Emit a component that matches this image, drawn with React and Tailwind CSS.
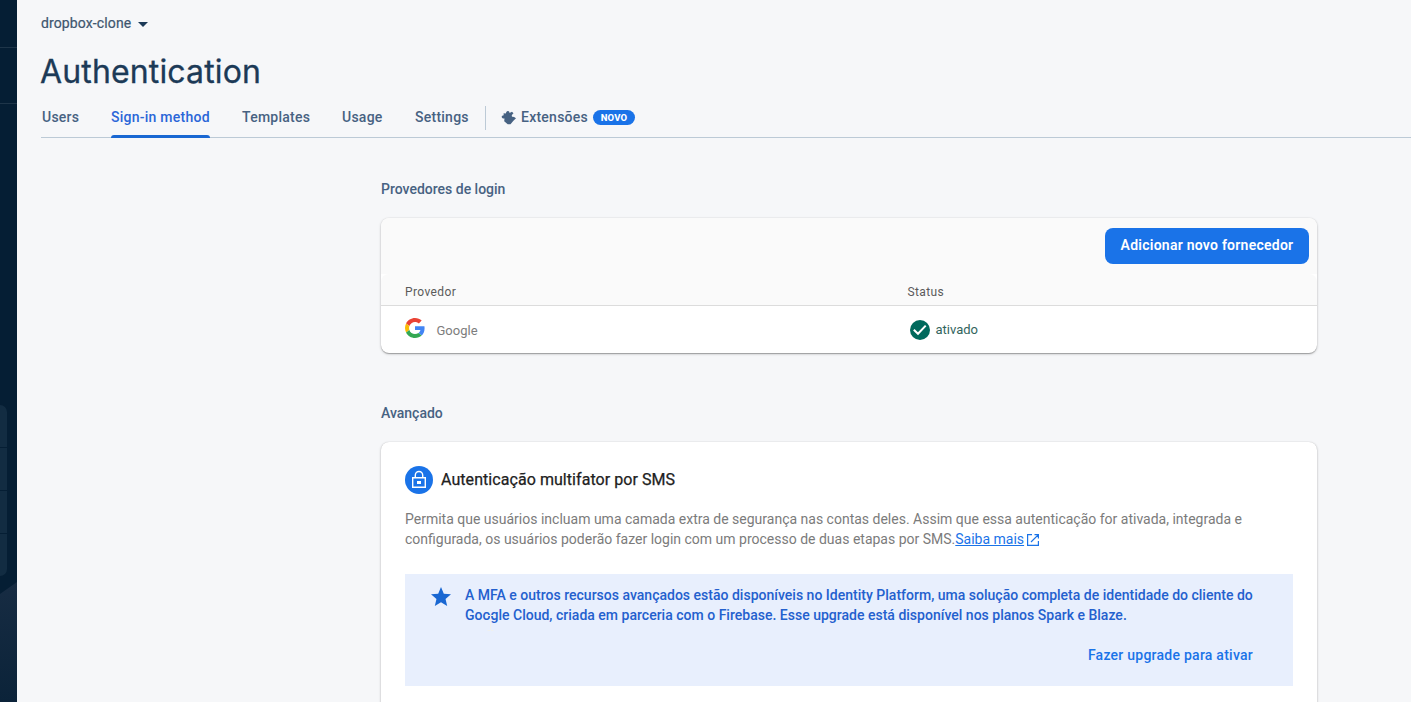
const TABS = [
  { label: "Users", cls: "w-[38px] pl-px" },
  { label: "Sign-in method", cls: "w-[99px]", active: true },
  { label: "Templates", cls: "w-[68px]" },
  { label: "Usage", cls: "w-[41px]" },
  { label: "Settings", cls: "w-[54px]" },
];

function GoogleLogo() {
  return (
    <svg viewBox="0 0 48 48" className="block size-5">
      <path fill="#EA4335" d="M24 9.5c3.54 0 6.71 1.22 9.21 3.6l6.85-6.85C35.9 2.38 30.47 0 24 0 14.62 0 6.51 5.38 2.56 13.22l7.98 6.19C12.43 13.72 17.74 9.5 24 9.5z" />
      <path fill="#4285F4" d="M46.98 24.55c0-1.57-.15-3.09-.38-4.55H24v9.02h12.94c-.58 2.96-2.26 5.48-4.78 7.18l7.73 6c4.51-4.18 7.09-10.36 7.09-17.65z" />
      <path fill="#FBBC05" d="M10.53 28.59c-.48-1.45-.76-2.99-.76-4.59s.27-3.14.76-4.59l-7.98-6.19C.92 16.46 0 20.12 0 24c0 3.88.92 7.54 2.56 10.78l7.97-6.19z" />
      <path fill="#34A853" d="M24 48c6.48 0 11.93-2.13 15.89-5.81l-7.73-6c-2.15 1.45-4.92 2.3-8.16 2.3-6.26 0-11.57-4.22-13.47-9.91l-7.98 6.19C6.51 42.62 14.62 48 24 48z" />
    </svg>
  );
}

function Sidebar() {
  return (
    <aside className="flex w-[17px] shrink-0 flex-col bg-[#051e34]">
      <div className="h-12 border-b border-[#1e3549]" />
      <div className="h-14 border-b border-[#1e3549]" />
      <div className="mt-[301px] flex h-[171px] w-[7px] flex-col overflow-hidden rounded-r-lg bg-[#122c42]">
        <div className="h-[43px] border-b border-[#051e34]" />
        <div className="h-[43px] border-b border-[#051e34]" />
        <div className="h-[43px] border-b border-[#051e34]" />
      </div>
      <svg viewBox="0 0 17 126" className="block h-[126px] w-[17px]">
        <defs>
          <linearGradient id="slope" x1="0" y1="0" x2="0" y2="1">
            <stop offset="0" stopColor="#172c43" />
            <stop offset="1" stopColor="#0b2339" />
          </linearGradient>
        </defs>
        <path d="M0 18L17 6V126H0z" fill="url(#slope)" />
      </svg>
    </aside>
  );
}

function Header() {
  return (
    <header className="ml-6">
      <div className="flex h-[46px] items-center text-sm font-medium text-[#3f566f]">
        <span className="w-[90px] whitespace-nowrap font-normal tracking-[0.12px] [-webkit-text-stroke:0.2px]">dropbox-clone</span>
        <svg viewBox="0 0 10 5" className="mt-0.5 ml-[7px] h-[5px] w-[10px]">
          <path d="M0 0h10L5 5z" fill="#1c3a57" />
        </svg>
      </div>
      <h1 className="-ml-px h-[52px] font-[Inter,sans-serif] text-[32px] leading-[52px] tracking-[0.15px] whitespace-nowrap text-[#1c3a57] [-webkit-text-stroke:0.3px]">
        Authentication
      </h1>
      <nav className="flex h-10 border-b border-[#bccad6] text-sm leading-[38px] font-medium tracking-[0.25px] text-[#476282]">
        <div className="flex gap-8">
          {TABS.map((t) => (
            <div key={t.label} className={t.cls + " flex h-10 flex-col justify-between whitespace-nowrap"}>
              <span className={t.active ? "text-[#2a66d8]" : ""}>{t.label}</span>
              {t.active && <span className="h-[3px] shrink-0 -translate-y-px rounded-t-[3px] bg-[#1967d2]" />}
            </div>
          ))}
        </div>
        <div className="mt-2 ml-4 h-6 w-px bg-[#bccad6]" />
        <div className="ml-[15px] flex h-[39px] items-start">
          <svg viewBox="0 0 15 15" className="mt-3 size-[15px]">
            <path
              d="M2.600 3.200L4.700 3.600C5.200 3.300 5 1.300 6.700 1.100 8.200 1 8.500 2 8.500 3.100L11 1.700 12.500 3.200 11.300 4.600C10 6 11.200 7.500 12.700 6.800L15 8.300 12.200 11 9.500 14.200H6.700L3.200 11.300 3.500 8.500C2.200 8.600 1 8.200.7 7 .5 6 1.500 5.500 2.700 5.200z"
              fill="#476282"
            />
          </svg>
          <span className="ml-[5px] w-[67px] whitespace-nowrap">Extensões</span>
          <span className="mt-3 ml-[5px] flex h-[15px] w-[42px] items-center justify-center rounded-full bg-[#1a73e8] text-[9.5px] leading-none font-extrabold tracking-[0.2px] text-white">
            NOVO
          </span>
        </div>
      </nav>
    </header>
  );
}

function Providers() {
  return (
    <section>
      <h2 className="h-[29px] text-sm leading-5 font-medium text-[#476282]">Provedores de login</h2>
      <div className="mt-[10px] h-[135px] overflow-hidden rounded-lg bg-white shadow-[0_2px_1px_-1px_rgba(0,0,0,.15),0_1px_1px_0_rgba(0,0,0,.1),0_1px_3px_0_rgba(0,0,0,.2),0_0_1px_0_rgba(0,0,0,.2)]">
        <div className="flex h-14 justify-end bg-[#fafafa] pt-[10px] pr-2">
          <button className="h-9 w-[204px] rounded-lg bg-[#1a73e8] pb-0.5 text-sm font-semibold tracking-[0.25px] whitespace-nowrap text-white">
            Adicionar novo fornecedor
          </button>
        </div>
        <div className="bg-white">
          <div className="flex h-8 rounded-t-lg border-b border-[#dcdcdc] bg-[#fafafa] pt-2 pl-6 text-xs tracking-[0.4px] text-[#5a5a5a]">
            <span className="w-[502.5px] leading-[21px]">Provedor</span>
            <span className="leading-[21px]">Status</span>
          </div>
        </div>
        <div className="flex h-12 items-center pl-6">
          <div className="flex w-[504.5px] items-center">
            <div className="-mt-1">
              <GoogleLogo />
            </div>
            <span className="mt-0.5 ml-[11.5px] text-[13px] text-[#7d7d7d]">Google</span>
          </div>
          <svg viewBox="0 0 20 20" className="-mt-px size-5">
            <circle cx="10" cy="10" r="10" fill="#00695c" />
            <path d="M3.800 9.800l4.200 4 7.700-8.200" fill="none" stroke="#fff" strokeWidth="2" />
          </svg>
          <span className="ml-[6px] text-[13px] text-[#32645d]">ativado</span>
        </div>
      </div>
    </section>
  );
}

function Advanced() {
  return (
    <section className="mt-[50px]">
      <h2 className="h-[29px] text-sm leading-5 font-medium text-[#476282]">Avançado</h2>
      <div className="mt-[10px] h-[300px] rounded-lg bg-white px-6 pt-6 shadow-[0_2px_1px_-1px_rgba(0,0,0,.15),0_1px_1px_0_rgba(0,0,0,.1),0_1px_3px_0_rgba(0,0,0,.2),0_0_1px_0_rgba(0,0,0,.2)]">
        <div className="flex h-7 items-center gap-2">
          <svg viewBox="0 0 28 28" className="size-7">
            <circle cx="14" cy="14" r="14" fill="#1a73e8" />
            <path d="M7.700 11.700h12.600v9.600H7.700z" fill="none" stroke="#fff" strokeWidth="1.400" />
            <path d="M10.300 11.500V9.200a3.700 3.700 0 0 1 7.400 0v2.300" fill="none" stroke="#fff" strokeWidth="1.400" />
            <path d="M12 15h4v3h-4z" fill="#fff" />
          </svg>
          <h3 className="text-base leading-6 font-normal tracking-[0.06px] whitespace-nowrap text-[#212121] [-webkit-text-stroke:0.25px]">Autenticação multifator por SMS</h3>
        </div>
        <p className="mt-[15px] text-sm leading-5 whitespace-nowrap text-[#7b7b7b]">
          Permita que usuários incluam uma camada extra de segurança nas contas deles. Assim que essa autenticação for ativada, integrada e
          <br />
          configurada, os usuários poderão fazer login com um processo de duas etapas por SMS.
          <a className="text-[#1a73e8] underline">Saiba mais</a>
          <svg viewBox="0 0 12 12" className="mb-px ml-[3px] inline size-3 align-middle">
            <path d="M5 .6H.6v10.800h10.800V7M7.500.6h3.900v3.900M11.200.8L4 8" fill="none" stroke="#1a73e8" strokeWidth="1.200" />
          </svg>
        </p>
        <div className="mt-[25px] flex h-28 flex-col bg-[#e8effd] pt-[11px] pr-10 pl-[26px]">
          <div className="flex">
            <svg viewBox="2 2 20 19" className="mt-[2px] h-[19px] w-5 shrink-0">
              <path d="M12 17.270L18.180 21l-1.640-7.030L22 9.240l-7.190-.61L12 2 9.190 8.630 2 9.240l5.460 4.730L5.820 21z" fill="#1967d2" />
            </svg>
            <p className="relative ml-[14px] text-sm leading-5 font-medium tracking-[0.01px] whitespace-nowrap text-[#2360ce]">
              A MFA e outros recursos avançados estão disponíveis no Identity Platform, uma solução completa de identidade do cliente do
              <br />
              Google Cloud, criada em parceria com o Firebase. Esse upgrade está disponível nos planos Spark e Blaze.
              <svg viewBox="0 0 7 16" className="absolute top-[30px] left-[22px] h-4 w-[7px]">
                <path d="M.5.500H3M4 .500h2.500M3.500 1v14M.500 15.500H3M4 15.500h2.500" fill="none" stroke="#eff0ee" />
              </svg>
            </p>
          </div>
          <a className="mt-5 self-end text-sm leading-5 font-medium tracking-[0.25px] text-[#1a73e8]">Fazer upgrade para ativar</a>
        </div>
      </div>
    </section>
  );
}

export default function App() {
  return (
    <div className="flex h-[702px] w-[1411px] overflow-hidden bg-[#f6f7f9] font-[Roboto,sans-serif]">
      <Sidebar />
      <main className="flex-1">
        <Header />
        <div className="mt-[41px] ml-[364px] w-[936px]">
          <Providers />
          <Advanced />
        </div>
      </main>
    </div>
  );
}
